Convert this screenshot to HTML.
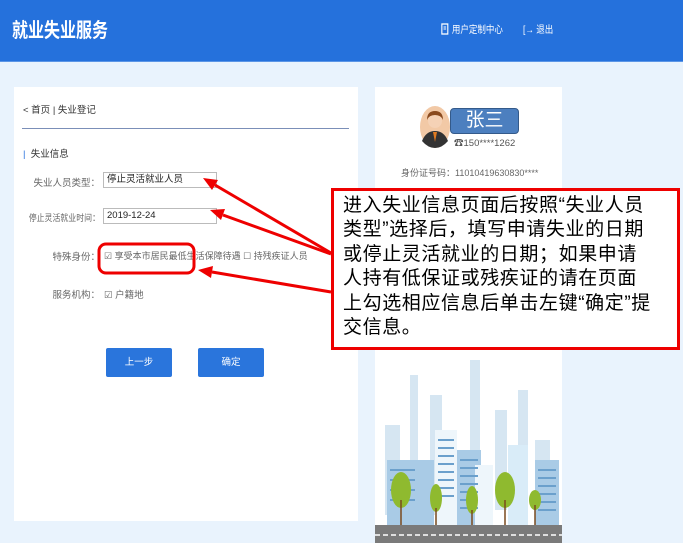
<!DOCTYPE html>
<html><head><meta charset="utf-8"><style>
*{margin:0;padding:0;box-sizing:border-box}
body{width:683px;height:543px;overflow:hidden;background:#e9f3fd;font-family:"Liberation Sans","Noto Sans CJK SC",sans-serif;position:relative}
.hdr{position:absolute;left:0;top:0;width:683px;height:62px;background:#2571dc;border-bottom:1px solid #5b95e6}
.t{position:absolute;left:12px;top:14px;color:#fff;font-size:20px;font-weight:bold;transform:scaleX(0.8);transform-origin:left}
.nav{position:absolute;top:21px;color:#fff;font-size:10px;transform:scaleX(0.85);transform-origin:left;white-space:nowrap}
.card{position:absolute;background:#fff}
.s{position:absolute;font-size:9.5px;color:#666;white-space:nowrap}
.r{text-align:right;width:100px;left:0}
.in{position:absolute;border:1px solid #bbb;height:16px;font-size:9.5px;color:#222;padding-left:3px;line-height:14px;background:#fff}
.btn{position:absolute;background:#2a75dc;color:#fff;font-size:9.5px;text-align:center;line-height:29px;border-radius:2px;width:66px;height:29px;top:348px}
.call{position:absolute;left:331px;top:188px;width:349px;height:162px;border:3px solid #e00;background:#fff;font-size:19px;line-height:24.4px;color:#000;padding:3px 0 0 9px;letter-spacing:0.6px;white-space:nowrap}
</style></head><body>
<div class="hdr"><div class="t">就业失业服务</div>
<div class="nav" style="left:441px"><svg width="10" height="12" viewBox="0 0 10 12" style="vertical-align:-2px"><rect x="1" y="1" width="7" height="10" fill="none" stroke="#fff" stroke-width="1.3"/><path d="M3 4h3M3 6h3" stroke="#fff"/></svg> 用户定制中心</div>
<div class="nav" style="left:523px">[→ 退出</div></div>

<div class="card" style="left:14px;top:87px;width:344px;height:434px"></div>
<div class="s" style="left:23px;top:102px;color:#333">&lt; 首页 | 失业登记</div>
<div style="position:absolute;left:22px;top:128px;width:327px;height:1px;background:#7b8fb8"></div>
<div class="s" style="left:23px;top:146px;color:#333"><span style="color:#2571dc">|</span>&nbsp; 失业信息</div>
<div class="s r" style="top:175px">失业人员类型：</div>
<div class="in" style="left:103px;top:172px;width:114px">停止灵活就业人员</div>
<div class="s r" style="top:211px;font-size:9px;transform:scaleX(0.88);transform-origin:right">停止灵活就业时间：</div>
<div class="in" style="left:103px;top:208px;width:114px">2019-12-24</div>
<div class="s r" style="top:249px">特殊身份：</div>
<div class="s" style="left:104px;top:249px;font-size:9px">☑ 享受本市居民最低生活保障待遇 ☐ 持残疾证人员</div>
<div class="s r" style="top:287px">服务机构：</div>
<div class="s" style="left:104px;top:287px">☑ 户籍地</div>
<div class="btn" style="left:106px">上一步</div>
<div class="btn" style="left:198px">确定</div>

<div class="card" style="left:375px;top:87px;width:187px;height:456px"></div>
<svg style="position:absolute;left:420px;top:106px" width="30" height="42" viewBox="0 0 30 42"><ellipse cx="15" cy="21" rx="15" ry="21" fill="#f2c9a6"/><circle cx="15" cy="15" r="7" fill="#f5d2b6"/><path d="M7 14q0-9 8-9t8 9q-2-5-8-5t-8 5z" fill="#8a4a1e"/><path d="M2 35q4-10 13-10t13 10q-6 7-13 7t-13-7z" fill="#333"/><path d="M13 26l2 10 2-10z" fill="#e07a20"/></svg>
<div style="position:absolute;left:450px;top:108px;width:69px;height:26px;background:#4c7fbf;border:1px solid #345a8a;border-radius:4px;color:#fff;font-size:19px;text-align:center;line-height:24px">张三</div>
<div class="s" style="left:454px;top:135px;color:#555">☎150****1262</div>
<div class="s" style="left:401px;top:166px;color:#666;font-size:9px">身份证号码：11010419630830****</div>
<svg style="position:absolute;left:375px;top:350px" width="187" height="193" viewBox="0 0 187 193">
<rect width="187" height="193" fill="#fff"/>
<g fill="#d6e6f2"><rect x="35" y="25" width="8" height="140"/><rect x="95" y="10" width="10" height="150"/><rect x="143" y="40" width="10" height="120"/><rect x="55" y="45" width="12" height="120"/><rect x="120" y="60" width="12" height="100"/><rect x="160" y="90" width="15" height="80"/><rect x="10" y="75" width="15" height="90"/></g>
<g fill="#a9cbe6"><rect x="12" y="110" width="32" height="65"/><rect x="82" y="100" width="24" height="75"/><rect x="160" y="110" width="24" height="65"/><rect x="44" y="110" width="15" height="65"/></g>
<rect x="60" y="80" width="22" height="95" fill="#eef6fb"/><rect x="100" y="115" width="18" height="60" fill="#eef6fb"/><rect x="133" y="95" width="20" height="80" fill="#d9ecf8"/>
<g stroke="#6ba0cc" stroke-width="2"><path d="M63 90h16M63 98h16M63 106h16M63 114h16M63 122h16M63 130h16M63 138h16M63 146h16M85 110h18M85 118h18M85 126h18M85 134h18M85 142h18M85 150h18M85 158h18M163 120h18M163 128h18M163 136h18M163 144h18M163 152h18M163 160h18M15 120h25M15 130h25M15 140h25M15 150h25"/></g>
<g fill="#8fba2f"><ellipse cx="26" cy="140" rx="10" ry="18"/><ellipse cx="61" cy="148" rx="6" ry="14"/><ellipse cx="97" cy="150" rx="6" ry="14"/><ellipse cx="130" cy="140" rx="10" ry="18"/><ellipse cx="160" cy="150" rx="6" ry="10"/></g>
<g stroke="#7a4a1e" stroke-width="1.5"><path d="M26 150v25M61 158v17M97 160v15M130 150v25M160 155v20"/></g>
<rect x="0" y="175" width="187" height="18" fill="#7a7a7a"/>
<path d="M0 185h187" stroke="#fff" stroke-width="1.5" stroke-dasharray="5 3"/>
</svg>

<div class="call">进入失业信息页面后按照“失业人员<br>类型”选择后，填写申请失业的日期<br>或停止灵活就业的日期；如果申请<br>人持有低保证或残疾证的请在页面<br>上勾选相应信息后单击左键“确定”提<br>交信息。</div>

<svg style="position:absolute;left:0;top:0" width="683" height="543" viewBox="0 0 683 543">
<rect x="99" y="244" width="95" height="29" rx="7" fill="none" stroke="#e00" stroke-width="3"/>
<g stroke="#e00" stroke-width="3" fill="none">
<path d="M331 253L215 185"/><path d="M331 254L223 215"/><path d="M331 292L212 272"/></g>
<g fill="#e00">
<polygon points="203,178 218,180 212,190"/>
<polygon points="210,210 225,209 221,220"/>
<polygon points="198,270 213,266 211,278"/></g>
</svg>
</body></html>
